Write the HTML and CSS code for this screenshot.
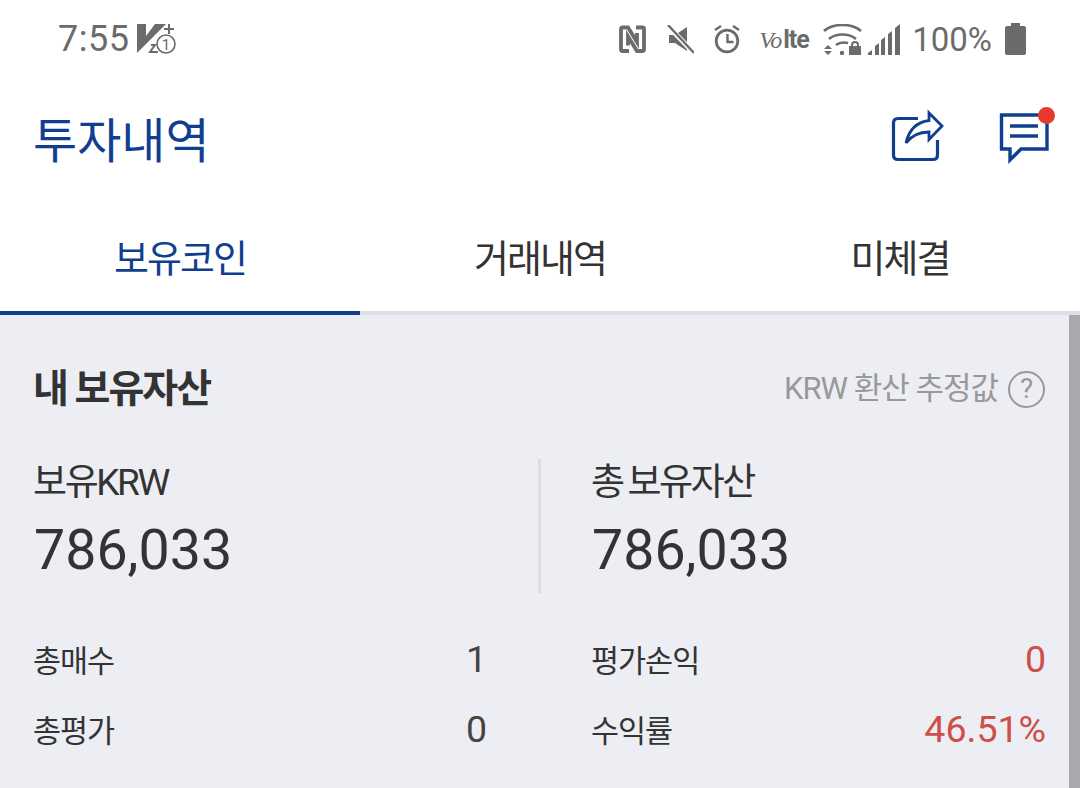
FILE: index.html
```html
<!DOCTYPE html>
<html lang="ko">
<head>
    <meta charset="UTF-8">
    <meta name="viewport" content="width=device-width, initial-scale=1.0">
    <title>투자내역</title>
    <link rel="stylesheet" href="styles.css">
</head>
<body>
    <div class="status-bar">
        <div class="status-left">
            <span class="clock">7:55</span>
            <svg class="st-carrier" width="40" height="32" viewBox="0 0 40 32">
                <path d="M0 1h9v12L18 1h11L0 30z" fill="#6b6b6b"/>
                <path d="M27 6h10M32 1v10" stroke="#6b6b6b" stroke-width="2" fill="none"/>
                <path d="M14 22h4l-5 7h8" stroke="#6b6b6b" stroke-width="2" fill="none"/>
                <circle cx="29" cy="21" r="9" fill="#fff" stroke="#6b6b6b" stroke-width="1.600"/>
                <text class="st-one" x="29" y="27" text-anchor="middle">1</text>
            </svg>
        </div>
        <div class="status-right">
            <svg width="27" height="28" viewBox="0 0 27 28">
                <path d="M10 26H3.500C2.500 26 2 25.500 2 24.500V4C2 3 2.500 2.500 3.500 2.500H9L18 17V8" fill="none" stroke="#6b6b6b" stroke-width="3.800"/>
                <path d="M17 2.500H23.500C24.500 2.500 25 3 25 4V24.500C25 25.500 24.500 26 23.500 26H18L9 11.500V20.500" fill="none" stroke="#6b6b6b" stroke-width="3.800"/>
            </svg>
            <svg class="st-mute" width="27" height="29" viewBox="0 0 27 29">
                <path d="M2 10h6l12-8v24l-12-8H2z" fill="#6b6b6b"/>
                <path d="M0 0l27 28" stroke="#fff" stroke-width="5"/>
                <path d="M1 0l26 28" stroke="#6b6b6b" stroke-width="2.400"/>
            </svg>
            <svg class="st-alarm" width="26" height="30" viewBox="0 0 26 30">
                <circle cx="13" cy="17" r="10.800" fill="none" stroke="#6b6b6b" stroke-width="2.800"/>
                <path d="M13.500 10v8h6" fill="none" stroke="#6b6b6b" stroke-width="2.400"/>
                <path d="M1 6l6-4M25 6l-6-4" stroke="#6b6b6b" stroke-width="2.400"/>
            </svg>
            <span class="volte"><em>Vo</em>lte</span>
            <svg class="st-wifi" width="39" height="31" viewBox="0 0 39 31">
                <path d="M1 7C10-1 29-1 38 7" fill="none" stroke="#6b6b6b" stroke-width="2.600"/>
                <path d="M6 15c7-6 20-6 27 0" fill="none" stroke="#6b6b6b" stroke-width="2.600"/>
                <path d="M13 21c4-3 8-3 12-2" fill="none" stroke="#6b6b6b" stroke-width="2.600"/>
                <circle cx="19" cy="29" r="2.200" fill="#6b6b6b"/>
                <path d="M1 25h8l-4-4zM1 27h8l-4 4z" fill="#6b6b6b"/>
                <rect x="26" y="22" width="12" height="9" fill="#6b6b6b"/>
                <path d="M29 22v-1c0-4 6-4 6 0v1" fill="none" stroke="#6b6b6b" stroke-width="2"/>
            </svg>
            <svg class="st-signal" width="33" height="31" viewBox="0 0 33 31">
                <path d="M0 31v-2l4-3v5zM7 31V22l4-3v12zM13 31V16l4-3v18zM20 31V10l4-3v24zM27 31V4l5-4v31z" fill="#6b6b6b"/>
            </svg>
            <span class="battery-text">100%</span>
            <svg class="st-battery" width="21" height="32" viewBox="0 0 21 32">
                <path d="M6 0h9v3h4c1 0 2 1 2 2v25c0 1-1 2-2 2H2c-1 0-2-1-2-2V5c0-1 1-2 2-2h4z" fill="#6b6b6b"/>
            </svg>
        </div>
    </div>

    <header class="title-bar">
        <h1>투자내역</h1>
        <div class="title-actions">
            <svg width="58" height="58" viewBox="0 0 58 58">
                <path d="M30 10.500H10c-3 0-4.500 2-4.500 4.500v32c0 3 2 4.500 4.500 4.500h35c3 0 4.500-2 4.500-4.500V32" fill="none" stroke="#103f8f" stroke-width="3.200"/>
                <path d="M18 35C21 21 30 14 41 12.500V5L54 18 41 31.500V24C31 24 24 27 18 35z" fill="#fff" stroke="#103f8f" stroke-width="2.800"/>
            </svg>
            <div class="chat-icon">
                <svg width="52" height="58" viewBox="0 0 52 58">
                    <path d="M3.500 7H49V41H23L12 52V41H3.500z" fill="none" stroke="#103f8f" stroke-width="3.400"/>
                    <path d="M12 18h28M12 28h28" stroke="#103f8f" stroke-width="3.400"/>
                </svg>
                <span class="chat-dot"></span>
            </div>
        </div>
    </header>

    <nav class="tabs">
        <div class="tab active">보유코인</div>
        <div class="tab">거래내역</div>
        <div class="tab">미체결</div>
    </nav>

    <main class="assets">
        <div class="scroll-thumb"></div>
        <div class="assets-head">
            <h2>내 보유자산</h2>
            <div class="estimate">
                <span>KRW 환산 추정값</span>
                <span class="help">?</span>
            </div>
        </div>
        <div class="totals">
            <div class="total">
                <div class="total-label">보유KRW</div>
                <div class="total-value">786,033</div>
            </div>
            <div class="total total-right">
                <div class="total-label">총 보유자산</div>
                <div class="total-value">786,033</div>
            </div>
        </div>
        <div class="details">
            <div class="row"><span>총매수</span><span class="num">1</span></div>
            <div class="row"><span>평가손익</span><span class="num red">0</span></div>
            <div class="row"><span>총평가</span><span class="num">0</span></div>
            <div class="row"><span>수익률</span><span class="num red">46.51%</span></div>
        </div>
    </main>
</body>
</html>
```

FILE: styles.css
```css
* {
    box-sizing: border-box;
}
body {
    margin: 0;
    width: 1080px;
    height: 788px;
    overflow: hidden;
    background: #fff;
    font-family: Roboto, "Noto Sans CJK KR", sans-serif;
    color: #333;
}
.status-bar {
    height: 78px;
    padding: 0 54px 0 58px;
    display: flex;
    justify-content: space-between;
    align-items: center;
    color: #6b6b6b;
}
.status-left, .status-right {
    display: flex;
    align-items: center;
}
.clock {
    font-size: 36px;
    letter-spacing: 0.5px;
}
.st-carrier {
    margin-left: 8px;
}
.st-one {
    font-size: 15px;
    fill: #6b6b6b;
}
.st-mute {
    margin-left: 21px;
}
.st-alarm {
    margin-left: 20px;
}
.volte {
    margin-left: 19px;
    width: 48px;
    font-size: 25px;
    font-weight: 700;
    letter-spacing: -1px;
    white-space: nowrap;
}
.volte em {
    font-family: "Liberation Serif", serif;
    font-size: 24px;
    font-weight: 400;
    margin-right: 2px;
}
.st-wifi {
    margin-left: 16px;
}
.st-signal {
    margin-left: 6px;
}
.battery-text {
    margin-left: 11px;
    font-size: 33px;
}
.st-battery {
    margin-left: 13px;
}
.title-bar {
    height: 118px;
    padding: 0 30px 0 33px;
    display: flex;
    justify-content: space-between;
    align-items: center;
}
.title-bar h1 {
    margin: 0;
    font-size: 48px;
    font-weight: 400;
    color: #103f8f;
    letter-spacing: 0;
}
.title-actions {
    display: flex;
    align-items: center;
    gap: 52px;
}
.chat-icon {
    position: relative;
    display: flex;
}
.chat-dot {
    position: absolute;
    top: -1px;
    right: -5px;
    width: 17px;
    height: 17px;
    border-radius: 50%;
    background: #e8392f;
}
.tabs {
    display: flex;
    height: 119px;
    border-bottom: 4px solid #dfe0e4;
}
.tab {
    flex: 1;
    height: 119px;
    display: flex;
    align-items: center;
    justify-content: center;
    padding-top: 4px;
    font-size: 38px;
    color: #333;
    letter-spacing: -2px;
    border-bottom: 4px solid transparent;
}
.tab.active {
    color: #103f8f;
    border-bottom-color: #103f8f;
}
.assets {
    position: relative;
    height: 473px;
    background: #eceef3;
    padding: 0 35px 0 33px;
}
.scroll-thumb {
    position: absolute;
    top: 0;
    right: 0;
    bottom: 0;
    width: 11px;
    background: #a8a9ad;
}
.assets-head {
    height: 144px;
    padding-top: 46px;
    display: flex;
    justify-content: space-between;
    align-items: flex-start;
}
.assets-head h2 {
    margin: 0;
    font-size: 39px;
    font-weight: 700;
    letter-spacing: -2px;
    line-height: 56px;
}
.estimate {
    display: flex;
    align-items: center;
    gap: 10px;
    font-size: 31px;
    color: #999;
    letter-spacing: -1px;
    line-height: 56px;
}
.help {
    width: 37px;
    height: 37px;
    border: 2px solid #999;
    border-radius: 50%;
    display: flex;
    align-items: center;
    justify-content: center;
    font-size: 28px;
    letter-spacing: 0;
}
.totals {
    display: grid;
    grid-template-columns: 505px 1fr;
    height: 134px;
}
.total-right {
    border-left: 3px solid #dcdde1;
    padding-left: 50px;
}
.total-label {
    font-size: 37px;
    letter-spacing: -2.400px;
    word-spacing: -2px;
    line-height: 48px;
}
.total-value {
    margin: 0 0 -2px 1px;
    font-size: 55.500px;
    line-height: 88px;
}
.details {
    display: grid;
    grid-template-columns: 454px 455px;
    column-gap: 104px;
    margin-top: 30px;
}
.row {
    display: flex;
    justify-content: space-between;
    align-items: center;
    height: 70px;
    padding-top: 1px;
    font-size: 30.500px;
    letter-spacing: -1px;
}
.num {
    font-size: 37.500px;
    letter-spacing: 0;
    color: #444;
}
.num.red {
    color: #cd4f4a;
}
```
